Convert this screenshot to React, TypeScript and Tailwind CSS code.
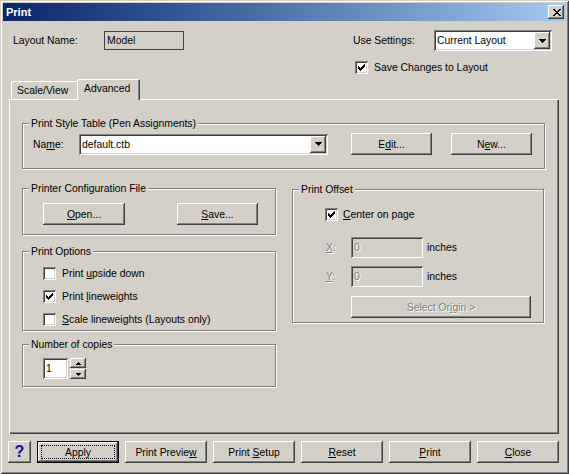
import React from "react";

const RAISED =
  "shadow-[inset_-1px_-1px_#404040,inset_1px_1px_#ffffff,inset_-2px_-2px_#808080,inset_2px_2px_#d4d0c8]";
const SUNKEN =
  "shadow-[inset_1px_1px_#808080,inset_-1px_-1px_#ffffff,inset_2px_2px_#404040,inset_-2px_-2px_#d4d0c8]";
const DIS = "text-[#808080] [text-shadow:1px_1px_0_#ffffff]";

function U({ children }: { children: React.ReactNode }) {
  return <span className="underline underline-offset-[1px] decoration-1">{children}</span>;
}

function CheckMark() {
  return (
    <svg width="7" height="7" viewBox="0 0 7 7" shapeRendering="crispEdges">
      <path
        d="M6 0h1v1H6z M5 1h2v1H5z M0 2h1v1H0z M4 2h3v1H4z M0 3h2v1H0z M3 3h3v1H3z M0 4h5v1H0z M1 5h3v1H1z M2 6h1v1H2z"
        fill="#000"
      />
    </svg>
  );
}

function Check({ checked }: { checked?: boolean }) {
  return (
    <div className={`w-[13px] h-[13px] shrink-0 bg-white flex items-center justify-center ${SUNKEN}`}>
      {checked && <CheckMark />}
    </div>
  );
}

function DownArrow() {
  return (
    <svg width="7" height="4" viewBox="0 0 7 4" shapeRendering="crispEdges">
      <path d="M0 0h7v1H0z M1 1h5v1H1z M2 2h3v1H2z M3 3h1v1H3z" fill="#000" />
    </svg>
  );
}

function Combo({ className, value }: { className: string; value: string }) {
  return (
    <div className={`h-[21px] bg-white p-[2px] flex ${SUNKEN} ${className}`}>
      <div className="flex-1 flex items-center pl-[1px]">{value}</div>
      <div className={`w-[16px] h-full bg-[#d4d0c8] flex items-center justify-center ${RAISED}`}>
        <DownArrow />
      </div>
    </div>
  );
}

function Btn({
  children,
  className = "",
  disabled,
}: {
  children: React.ReactNode;
  className?: string;
  disabled?: boolean;
}) {
  return (
    <div
      className={`h-[22px] shrink-0 flex items-center justify-center bg-[#d4d0c8] ${RAISED} ${
        disabled ? DIS : ""
      } ${className}`}
    >
      <span className="whitespace-pre">{children}</span>
    </div>
  );
}

function Group({
  label,
  className,
  children,
}: {
  label: string;
  className: string;
  children?: React.ReactNode;
}) {
  return (
    <div
      className={`relative border border-[#808080] shadow-[1px_1px_0_#ffffff,inset_1px_1px_0_#ffffff] ${className}`}
    >
      <div className="absolute left-[6px] top-[-7px] px-[2px] bg-[#d4d0c8] leading-[13px] whitespace-nowrap">
        {label}
      </div>
      {children}
    </div>
  );
}

export default function App() {
  return (
    <div
      className="w-[569px] h-[474px] p-[3px] bg-[#d4d0c8] text-black font-['Liberation_Sans',Arial,sans-serif] text-[10.4px] leading-[13px] shadow-[inset_1px_1px_#d4d0c8,inset_-1px_-1px_#404040,inset_2px_2px_#ffffff,inset_-2px_-2px_#808080]"
    >
      {/* Title bar */}
      <div className="h-[18px] flex items-center justify-between pl-[3px] pr-[2px] bg-linear-to-r from-[#0a246a] to-[#a6caf0]">
        <span className="text-white font-bold text-[11px]">Print</span>
        <div className={`w-[16px] h-[14px] bg-[#d4d0c8] flex items-center justify-center pl-[1px] ${RAISED}`}>
          <svg width="8" height="7" viewBox="0 0 8 7" shapeRendering="crispEdges">
            <path
              d="M0 0h2v1H0z M6 0h2v1H6z M1 1h2v1H1z M5 1h2v1H5z M2 2h4v1H2z M3 3h2v1H3z M2 4h4v1H2z M1 5h2v1H1z M5 5h2v1H5z M0 6h2v1H0z M6 6h2v1H6z"
              fill="#000"
            />
          </svg>
        </div>
      </div>

      {/* Top row */}
      <div className="mt-[9px] flex">
        <div className="w-[350px] h-[21px] flex items-center pl-[10px]">
          <span className="w-[91px]">Layout Name:</span>
          <div className="w-[80px] h-[19px] border border-[#404040] pl-[2px] flex items-center">Model</div>
        </div>
        <div>
          <div className="h-[21px] flex items-center">
            <span className="w-[81px]">Use Settings:</span>
            <Combo className="w-[118px]" value="Current Layout" />
          </div>
          <div className="mt-[10px] ml-[2px] flex items-center gap-[6px]">
            <Check checked />
            <span>Save Changes to Layout</span>
          </div>
        </div>
      </div>

      {/* Tabs */}
      <div className="ml-[6px] mt-[5px] h-[20px] pl-[2px] flex items-end">
        <div className="w-[66px] h-[18px] pl-[6px] flex items-center rounded-tl-[2px] shadow-[inset_1px_1px_#ffffff]">
          Scale/View
        </div>
        <div className="relative z-10 mb-[-1px] w-[63px] h-[21px] pl-[7px] pt-[3px] bg-[#d4d0c8] rounded-t-[2px] shadow-[inset_1px_1px_#ffffff,inset_-1px_0_#404040,inset_-2px_0_#808080]">
          Advanced
        </div>
      </div>

      {/* Panel */}
      <div className="ml-[6px] w-[550px] h-[335px] pl-[13px] pt-[24px] shadow-[inset_1px_1px_#ffffff,inset_-1px_-1px_#404040,inset_-2px_-2px_#808080]">
        <Group label="Print Style Table (Pen Assignments)" className="w-[523px] h-[46px]">
          <div className="pt-[9px] pl-[10px] flex items-center">
            <span className="w-[46px]">
              Na<U>m</U>e:
            </span>
            <Combo className="w-[249px]" value="default.ctb" />
            <Btn className="ml-[23px] w-[81px]">
              E<U>d</U>it...
            </Btn>
            <Btn className="ml-[19px] w-[81px]">
              N<U>e</U>w...
            </Btn>
          </div>
        </Group>

        <div className="flex items-start">
          <div className="w-[254px] mt-[19px]">
            <Group label="Printer Configuration File" className="w-[254px] h-[47px]">
              <div className="pt-[14px] pl-[20px] flex">
                <Btn className="w-[82px]">
                  <U>O</U>pen...
                </Btn>
                <Btn className="ml-[52px] w-[81px]">
                  <U>S</U>ave...
                </Btn>
              </div>
            </Group>

            <Group label="Print Options" className="mt-[16px] w-[254px] h-[80px]">
              <div className="pt-[15px] pl-[20px] flex flex-col gap-[10px]">
                <div className="h-[13px] flex items-center gap-[6px]">
                  <Check />
                  <span>
                    Print <U>u</U>pside down
                  </span>
                </div>
                <div className="h-[13px] flex items-center gap-[6px]">
                  <Check checked />
                  <span>
                    Print <U>l</U>ineweights
                  </span>
                </div>
                <div className="h-[13px] flex items-center gap-[6px]">
                  <Check />
                  <span>
                    <U>S</U>cale lineweights (Layouts only)
                  </span>
                </div>
              </div>
            </Group>

            <Group label="Number of copies" className="mt-[13px] w-[254px] h-[43px]">
              <div className="pt-[13px] pl-[20px] flex">
                <div className={`w-[25px] h-[21px] bg-white pl-[3px] flex items-center ${SUNKEN}`}>1</div>
                <div className="ml-[2px] w-[16px] h-[21px] flex flex-col gap-[1px]">
                  <div className={`h-[10px] bg-[#d4d0c8] flex items-center justify-center ${RAISED}`}>
                    <svg width="5" height="3" viewBox="0 0 5 3" shapeRendering="crispEdges">
                      <path d="M2 0h1v1H2z M1 1h3v1H1z M0 2h5v1H0z" fill="#000" />
                    </svg>
                  </div>
                  <div className={`h-[10px] bg-[#d4d0c8] flex items-center justify-center ${RAISED}`}>
                    <svg width="5" height="3" viewBox="0 0 5 3" shapeRendering="crispEdges">
                      <path d="M0 0h5v1H0z M1 1h3v1H1z M2 2h1v1H2z" fill="#000" />
                    </svg>
                  </div>
                </div>
              </div>
            </Group>
          </div>

          <Group label="Print Offset" className="ml-[16px] mt-[20px] w-[252px] h-[134px]">
            <div className="pt-[18px] pl-[32px]">
              <div className="h-[13px] flex items-center gap-[5px]">
                <Check checked />
                <span>
                  <U>C</U>enter on page
                </span>
              </div>
              <div className="mt-[16px] ml-[1px] flex items-center">
                <span className={`w-[25px] ${DIS}`}>
                  <U>X</U>:
                </span>
                <div className={`w-[72px] h-[21px] bg-[#d4d0c8] pl-[3px] flex items-center ${SUNKEN} ${DIS}`}>0</div>
                <span className="ml-[4px]">inches</span>
              </div>
              <div className="mt-[8px] ml-[1px] flex items-center">
                <span className={`w-[25px] ${DIS}`}>
                  <U>Y</U>:
                </span>
                <div className={`w-[72px] h-[21px] bg-[#d4d0c8] pl-[3px] flex items-center ${SUNKEN} ${DIS}`}>0</div>
                <span className="ml-[4px]">inches</span>
              </div>
              <Btn disabled className="mt-[9px] ml-[26px] w-[180px]">
                Select Or<U>i</U>gin &gt;
              </Btn>
            </div>
          </Group>
        </div>
      </div>

      {/* Bottom buttons */}
      <div className="mt-[7px] ml-[5px] flex gap-[6px]">
        <Btn className="w-[23px]">
          <span className="text-[16px] font-bold text-[#10108a] leading-none">?</span>
        </Btn>
        <div className="relative w-[82px] h-[22px] flex items-center justify-center bg-[#d4d0c8] shadow-[inset_0_0_0_1px_#000000,inset_-2px_-2px_#404040,inset_2px_2px_#ffffff,inset_-3px_-3px_#808080]">
          <div className="absolute inset-[4px] border border-dotted border-black" />
          Apply
        </div>
        <Btn className="w-[82px]">
          Print Previe<U>w</U>
        </Btn>
        <Btn className="w-[82px]">
          {"Print "}
          <U>S</U>etup
        </Btn>
        <Btn className="w-[82px]">
          <U>R</U>eset
        </Btn>
        <Btn className="w-[82px]">
          <U>P</U>rint
        </Btn>
        <Btn className="w-[82px]">
          <U>C</U>lose
        </Btn>
      </div>
    </div>
  );
}
